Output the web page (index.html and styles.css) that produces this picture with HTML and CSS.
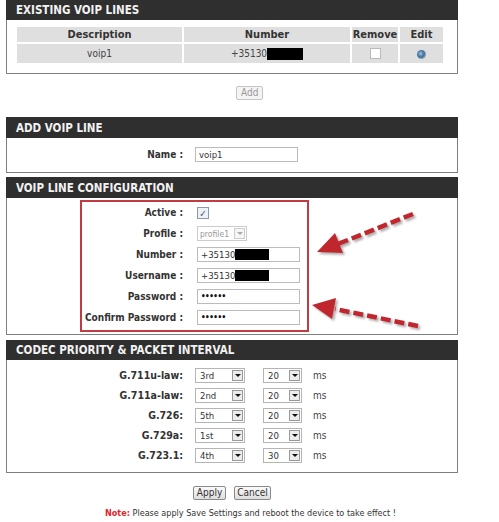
FILE: index.html
```html
<!DOCTYPE html>
<html lang='en'>
<head>
	<meta charset='UTF-8'>
	<title>VoIP Lines</title>
	<link rel="stylesheet" href="styles.css">
</head>
<body>
	<div class='page'>
		<div class='panel panel-existing'>
			<div class='panel-head'>EXISTING VOIP LINES</div>
			<div class='panel-body'>
				<table class='lines'>
					<tr>
						<th class='col-desc'>Description</th>
						<th class='col-num'>Number</th>
						<th class='col-remove'>Remove</th>
						<th class='col-edit'>Edit</th>
					</tr>
					<tr>
						<td>voip1</td>
						<td>+35130<span class='redact'></span></td>
						<td><span class='checkbox'></span></td>
						<td><span class='radio'></span></td>
					</tr>
				</table>
			</div>
		</div>

		<div class='add-row'><button class='btn btn-disabled'>Add</button></div>

		<div class='panel panel-add'>
			<div class='panel-head'>ADD VOIP LINE</div>
			<div class='panel-body'>
				<div class='form-row'>
					<div class='form-label'>Name :</div>
					<div class='text-input'>voip1</div>
				</div>
			</div>
		</div>

		<div class='panel panel-config'>
			<div class='panel-head'>VOIP LINE CONFIGURATION</div>
			<div class='panel-body'>
				<div class='highlight'>
					<div class='cfg-row'>
						<div class='cfg-label'>Active :</div>
						<span class='checkbox checked'>&#10003;</span>
					</div>
					<div class='cfg-row'>
						<div class='cfg-label'>Profile :</div>
						<div class='select select-profile'><span class='select-value'>profile1</span><span class='select-arrow'></span></div>
					</div>
					<div class='cfg-row'>
						<div class='cfg-label'>Number :</div>
						<div class='text-input'>+35130<span class='redact redact-input'></span></div>
					</div>
					<div class='cfg-row'>
						<div class='cfg-label'>Username :</div>
						<div class='text-input'>+35130<span class='redact redact-input'></span></div>
					</div>
					<div class='cfg-row'>
						<div class='cfg-label'>Password :</div>
						<div class='text-input dots'>&bull;&bull;&bull;&bull;&bull;&bull;</div>
					</div>
					<div class='cfg-row'>
						<div class='cfg-label'>Confirm Password :</div>
						<div class='text-input dots'>&bull;&bull;&bull;&bull;&bull;&bull;</div>
					</div>
				</div>
			</div>
		</div>

		<div class='panel panel-codec'>
			<div class='panel-head'>CODEC PRIORITY &amp; PACKET INTERVAL</div>
			<div class='panel-body'>
				<div class='codec-row'>
					<div class='codec-label'>G.711u-law:</div>
					<div class='select'><span class='select-value'>3rd</span><span class='select-arrow'></span></div>
					<div class='select select-small'><span class='select-value'>20</span><span class='select-arrow'></span></div>
					<span class='unit'>ms</span>
				</div>
				<div class='codec-row'>
					<div class='codec-label'>G.711a-law:</div>
					<div class='select'><span class='select-value'>2nd</span><span class='select-arrow'></span></div>
					<div class='select select-small'><span class='select-value'>20</span><span class='select-arrow'></span></div>
					<span class='unit'>ms</span>
				</div>
				<div class='codec-row'>
					<div class='codec-label'>G.726:</div>
					<div class='select'><span class='select-value'>5th</span><span class='select-arrow'></span></div>
					<div class='select select-small'><span class='select-value'>20</span><span class='select-arrow'></span></div>
					<span class='unit'>ms</span>
				</div>
				<div class='codec-row'>
					<div class='codec-label'>G.729a:</div>
					<div class='select'><span class='select-value'>1st</span><span class='select-arrow'></span></div>
					<div class='select select-small'><span class='select-value'>20</span><span class='select-arrow'></span></div>
					<span class='unit'>ms</span>
				</div>
				<div class='codec-row'>
					<div class='codec-label'>G.723.1:</div>
					<div class='select'><span class='select-value'>4th</span><span class='select-arrow'></span></div>
					<div class='select select-small'><span class='select-value'>30</span><span class='select-arrow'></span></div>
					<span class='unit'>ms</span>
				</div>
			</div>
		</div>

		<div class='button-row'>
			<button class='btn btn-apply'>Apply</button>
			<button class='btn btn-cancel'>Cancel</button>
		</div>

		<div class='note'><span class='note-tag'>Note:</span> Please apply Save Settings and reboot the device to take effect !</div>

		<svg class='arrows' width='499' height='522' viewBox='0 0 499 522'>
			<defs>
				<filter id='shadow' x='-20%' y='-20%' width='140%' height='140%'>
					<feDropShadow dx='2' dy='2' stdDeviation='1' flood-color='#777' flood-opacity='0.6'/>
				</filter>
			</defs>
			<g filter='url(#shadow)'>
				<line x1='413' y1='214' x2='338' y2='244' stroke='#c0262d' stroke-width='4.5' stroke-dasharray='10 4'/>
				<polygon points='317,252 343,253 335,233' fill='#c0262d'/>
				<line x1='418' y1='326' x2='335' y2='309' stroke='#c0262d' stroke-width='4.5' stroke-dasharray='10 4'/>
				<polygon points='312,305 336,298 332,319' fill='#c0262d'/>
			</g>
		</svg>
	</div>
</body>
</html>
```

FILE: styles.css
```css
html, body{
	margin:0;
	background-color:white;
}
body{
	font-family:"DejaVu Sans Condensed", "DejaVu Sans", sans-serif;
	font-size:11px;
	color:#222;
}
.page{
	position:relative;
	width:499px;
	height:522px;
	padding-left:6px;
	box-sizing:border-box;
}
.panel{
	width:452px;
	border:1px solid #7f7f7f;
	border-top:0;
	box-sizing:border-box;
	background-color:white;
}
.panel-head{
	margin:0 -1px;
	height:21px;
	line-height:22px;
	padding-left:10px;
	background-color:#2f2f2f;
	color:#f2f2f2;
	font-size:11.5px;
	font-weight:bold;
}
.panel-existing .panel-head{
	height:20px;
	line-height:21px;
}
.panel-existing .panel-body{
	padding:5px 0 8px 8px;
}
.lines{
	border-spacing:2px;
	font-size:11px;
}
.lines th, .lines td{
	background-color:#dfdfdf;
	text-align:center;
	padding:0;
}
.lines th{
	height:15px;
	font-weight:bold;
	color:#333;
}
.lines td{
	height:19px;
	color:#444;
	font-size:10px;
}
.col-desc{ width:165px; }
.col-num{ width:166px; }
.col-remove{ width:46px; }
.col-edit{ width:43px; }
.redact{
	display:inline-block;
	width:36px;
	height:12px;
	background-color:black;
	vertical-align:middle;
}
.checkbox{
	display:inline-block;
	width:11px;
	height:11px;
	border:1px solid #b8b8b8;
	background-color:white;
	vertical-align:middle;
	box-sizing:border-box;
}
.checkbox.checked{
	width:12px;
	height:12px;
	border-color:#8a98b0;
	background-color:#eef1f6;
	color:#4a5a86;
	font-size:10px;
	line-height:11px;
	text-align:center;
}
.radio{
	display:inline-block;
	width:9px;
	height:9px;
	border-radius:50%;
	background:radial-gradient(circle at 40% 40%, #9cc4e6 0, #3d6f9c 45%, #9aa7b4 75%);
	vertical-align:middle;
}
.add-row{
	margin:12px 0 17px 230px;
	height:14px;
}
.btn{
	height:14px;
	padding:0 4px;
	margin:0;
	font-family:inherit;
	font-size:10px;
	line-height:12px;
	color:#333;
	background:linear-gradient(#fafafa, #dedede);
	border:1px solid #8a8a8a;
	border-radius:2px;
	vertical-align:top;
}
.btn-disabled{
	color:#999;
	background:#f4f4f4;
	border-color:#c4c4c4;
}
.btn-apply{ width:33px; padding:0; }
.btn-cancel{ width:37px; padding:0; }
.panel-add .panel-body{
	padding:9px 0 10px 0;
}
.form-row{
	display:flex;
	align-items:center;
	height:15px;
}
.form-label{
	width:176px;
	text-align:right;
	font-size:10px;
	font-weight:bold;
	color:#333;
	margin-right:12px;
}
.text-input{
	display:flex;
	align-items:center;
	width:103px;
	height:15px;
	box-sizing:border-box;
	border:1px solid #bcbcbc;
	padding-left:3px;
	font-size:9.5px;
	color:#333;
	background-color:white;
}
.redact-input{
	width:34px;
	height:11px;
}
.dots{
	font-size:8px;
	letter-spacing:-.5px;
	color:#111;
	font-weight:bold;
}
.panel-config .panel-body{
	padding:2px 0 2px 0;
}
.highlight{
	margin-left:73px;
	width:229px;
	height:132px;
	box-sizing:border-box;
	border:2px solid #c23a42;
}
.cfg-row{
	display:flex;
	align-items:center;
	height:21px;
}
.cfg-label{
	width:101px;
	white-space:nowrap;
	text-align:right;
	font-weight:bold;
	font-size:10px;
	color:#333;
	margin-right:14px;
}
.select{
	display:flex;
	align-items:center;
	width:50px;
	height:15px;
	box-sizing:border-box;
	border:1px solid #b5b5b5;
	background-color:white;
	font-size:9.5px;
	color:#333;
}
.select-small{
	width:39px;
	margin-left:18px;
}
.select-value{
	flex:1;
	padding-left:4px;
	white-space:nowrap;
	overflow:hidden;
}
.select-arrow{
	position:relative;
	flex:none;
	width:11px;
	height:11px;
	margin-right:1px;
	box-sizing:border-box;
	border:1px solid #999;
	background-color:#ececec;
}
.select-arrow::after{
	content:'';
	position:absolute;
	left:2px;
	top:3px;
	border-left:3px solid transparent;
	border-right:3px solid transparent;
	border-top:3px solid #111;
}
.select-profile{
	width:50px;
	font-size:8.5px;
	color:#999;
	border-color:#ccc;
}
.select-profile .select-value{
	padding-left:2px;
}
.select-profile .select-arrow{
	border-color:#ccc;
	background-color:#f6f6f6;
}
.select-profile .select-arrow::after{
	border-top-color:#aaa;
}
.panel-codec .panel-head{
	height:20px;
	line-height:21px;
}
.panel-codec .panel-body{
	padding:5px 0 7px 0;
}
.codec-row{
	display:flex;
	align-items:center;
	height:20px;
}
.codec-label{
	width:176px;
	text-align:right;
	font-weight:bold;
	font-size:10.5px;
	color:#333;
	margin-right:12px;
}
.unit{
	margin-left:11px;
	font-size:10px;
	color:#444;
}
.panel-config{
	margin-top:4px;
}
.panel-codec{
	margin-top:5px;
}
.button-row{
	display:flex;
	gap:8px;
	margin:13px 0 0 187px;
}
.note{
	margin-top:8px;
	padding-left:99px;
	font-size:9px;
	color:#333;
}
.note-tag{
	color:#e3242b;
	font-weight:bold;
}
.arrows{
	position:absolute;
	left:0;
	top:0;
	pointer-events:none;
}
```
